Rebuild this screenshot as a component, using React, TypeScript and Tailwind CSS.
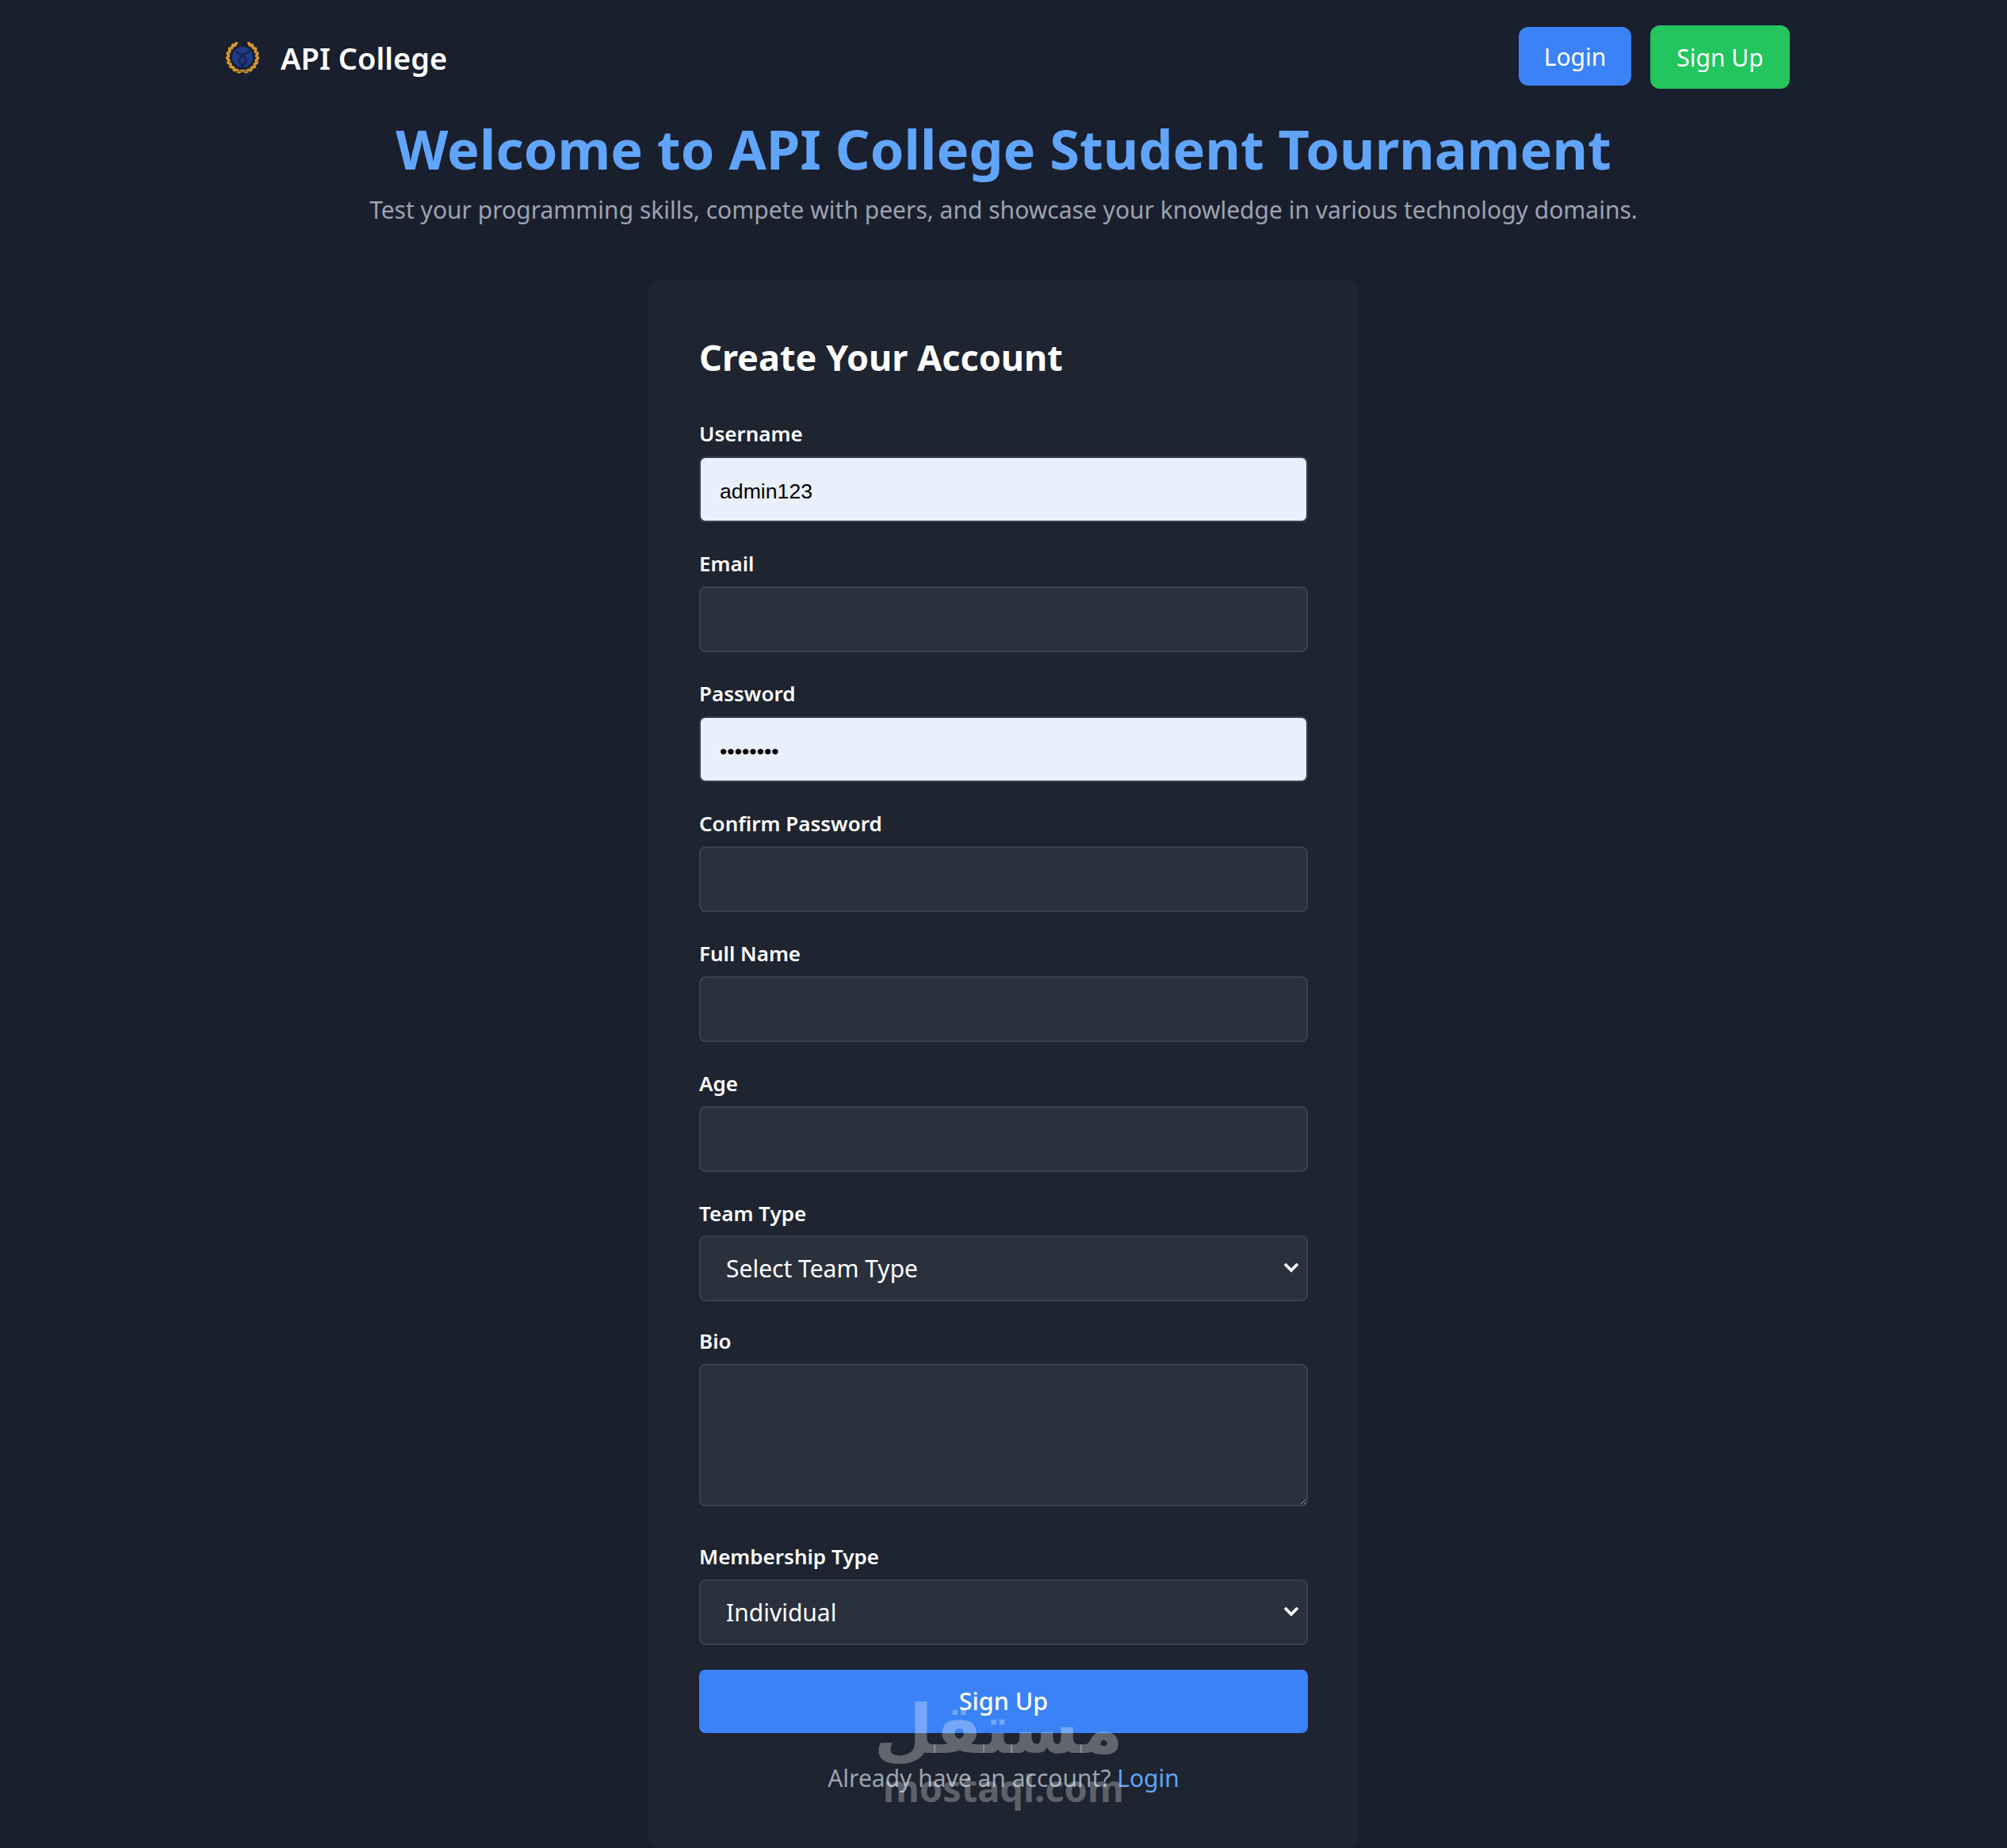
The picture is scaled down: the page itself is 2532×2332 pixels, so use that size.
import type { ReactNode } from 'react';

function Logo() {
  // laurel wreath around a blue crest, leaf pairs run from the bottom up each side
  const leaves = [100, 118, 136, 154, 172, 190, 208, 226, 242];
  return (
    <svg viewBox="0 0 46 40" className="w-[46px] h-[40px] mt-[2px]">
      <circle cx="23" cy="19" r="13" fill="#1e3a8a" />
      <path d="M14 11c4 4 6 5 9 5s5-1 9-5M23 16l-5 7 5 8 5-8z" fill="none" stroke="#172554" strokeWidth="2.6" />
      {leaves.map((deg) => {
        const a = (deg * Math.PI) / 180;
        const x = 23 + 18.5 * Math.cos(a);
        const y = 19 + 18.5 * Math.sin(a);
        const rot = deg + 60;
        return (
          <g key={deg}>
            <ellipse cx={x} cy={y} rx="4" ry="1.9" fill="#d99a2b" transform={`rotate(${rot} ${x} ${y})`} />
            <ellipse cx={46 - x} cy={y} rx="4" ry="1.9" fill="#d99a2b" transform={`rotate(${-rot} ${46 - x} ${y})`} />
          </g>
        );
      })}
      <path d="M14 38l18-2M32 38l-18-2" stroke="#8a6a2c" strokeWidth="1.2" />
    </svg>
  );
}

function Field({ label, children, className = 'mb-[31px]', gap = 'mb-2' }: { label: string; children: ReactNode; className?: string; gap?: string }) {
  return (
    <div className={className}>
      <label className={`block text-[26px] leading-[42px] font-semibold text-white ${gap}`}>{label}</label>
      {children}
    </div>
  );
}

const inputClass =
  'block w-full h-[83px] px-[24px] pt-[5px] rounded-lg border-2 border-[#374151] bg-[#2a303c] text-[26.67px] font-["Liberation_Sans",sans-serif] text-black outline-none';
const autofillClass =
  'block w-full h-[83px] px-[24px] pt-[5px] rounded-lg border-2 border-[#374151] bg-[#e8f0fe] text-[26.67px] font-["Liberation_Sans",sans-serif] text-black outline-none';

function SelectField({ value }: { value: string }) {
  return (
    <div className="relative">
      <select
        defaultValue={value}
        className="block w-full h-[83px] pl-[32px] pr-12 rounded-lg border-2 border-[#374151] bg-[#2a303c] text-[30px] text-white outline-none appearance-none"
      >
        <option>{value}</option>
      </select>
      <svg viewBox="0 0 20 14" className="absolute right-[11px] top-[33px] w-[20px] h-[14px]">
        <path d="M2 3l8 8 8-8" fill="none" stroke="#fff" strokeWidth="3.8" />
      </svg>
    </div>
  );
}

export default function App() {
  return (
    <div className='relative h-[2332px] overflow-hidden bg-[#1a1f2e] text-white font-["Noto_Sans",sans-serif]'>
      {/* Header */}
      <header className="w-[1984px] mx-auto pt-8 flex items-center justify-between h-[149px] pb-[37px]">
        <div className="flex items-center pl-[9px]">
          <Logo />
          <span className="ml-[25px] mt-[2px] text-[38px] leading-[60px] font-semibold">API College</span>
        </div>
        <div className="flex items-center gap-6">
          <button className="w-[142px] h-[74px] mb-[2px] pt-[1px] rounded-xl bg-[#3b82f6] text-[30px]">Login</button>
          <button className="w-[176px] h-[80px] rounded-xl bg-[#22c55e] text-[30px]">Sign Up</button>
        </div>
      </header>

      {/* Hero */}
      <div className="text-center">
        <h1 className="text-[68.5px] leading-[80px] font-bold text-[#60a5fa] -mt-[1px]">
          Welcome to API College Student Tournament
        </h1>
        <p className="mt-[13px] text-[30px] leading-[48px] text-[#9ca3af]">
          Test your programming skills, compete with peers, and showcase your knowledge in various technology domains.
        </p>
      </div>

      {/* Sign up card */}
      <div className="w-[896px] mx-auto mt-[63px] rounded-2xl bg-[#1e2430] px-16 pt-16 pb-16">
        <h2 className="text-[45px] leading-[70px] font-bold mb-[40px]">Create Your Account</h2>

        <Field label="Username">
          <input readOnly value="admin123" className={autofillClass} />
        </Field>
        <Field label="Email">
          <input readOnly className={inputClass} />
        </Field>
        <Field label="Password">
          <input readOnly type="password" value="password" className={autofillClass} />
        </Field>
        <Field label="Confirm Password">
          <input readOnly className={inputClass} />
        </Field>
        <Field label="Full Name">
          <input readOnly className={inputClass} />
        </Field>
        <Field label="Age">
          <input readOnly className={inputClass} />
        </Field>
        <Field label="Team Type" className="mb-[29px]" gap="mb-[7px]">
          <SelectField value="Select Team Type" />
        </Field>
        <Field label="Bio" className="mb-[42px]">
          <textarea readOnly className="block w-full h-[180px] rounded-lg border-2 border-[#374151] bg-[#2a303c] outline-none" />
        </Field>
        <Field label="Membership Type" className="mb-[31px]">
          <SelectField value="Individual" />
        </Field>

        <button className="block w-full h-[80px] rounded-lg bg-[#3b82f6] text-[30.5px] font-medium">Sign Up</button>
        <p className="mt-[33px] text-center text-[30px] leading-[48px] text-[#9ca3af]">
          Already have an account? <a className="text-[#60a5fa]">Login</a>
        </p>
      </div>

      {/* Watermark */}
      <div className="absolute left-[1114px] top-[2130px] w-[303px] text-center text-white/30 pointer-events-none">
        <div dir="rtl" className='ml-[5px] text-[86px] leading-[105px] font-bold font-["DejaVu_Sans",sans-serif]'>مستقل</div>
        <div className='-mt-[4px] text-[47px] leading-[50px] font-bold font-["Noto_Sans",sans-serif]'>mostaql.com</div>
      </div>
    </div>
  );
}
